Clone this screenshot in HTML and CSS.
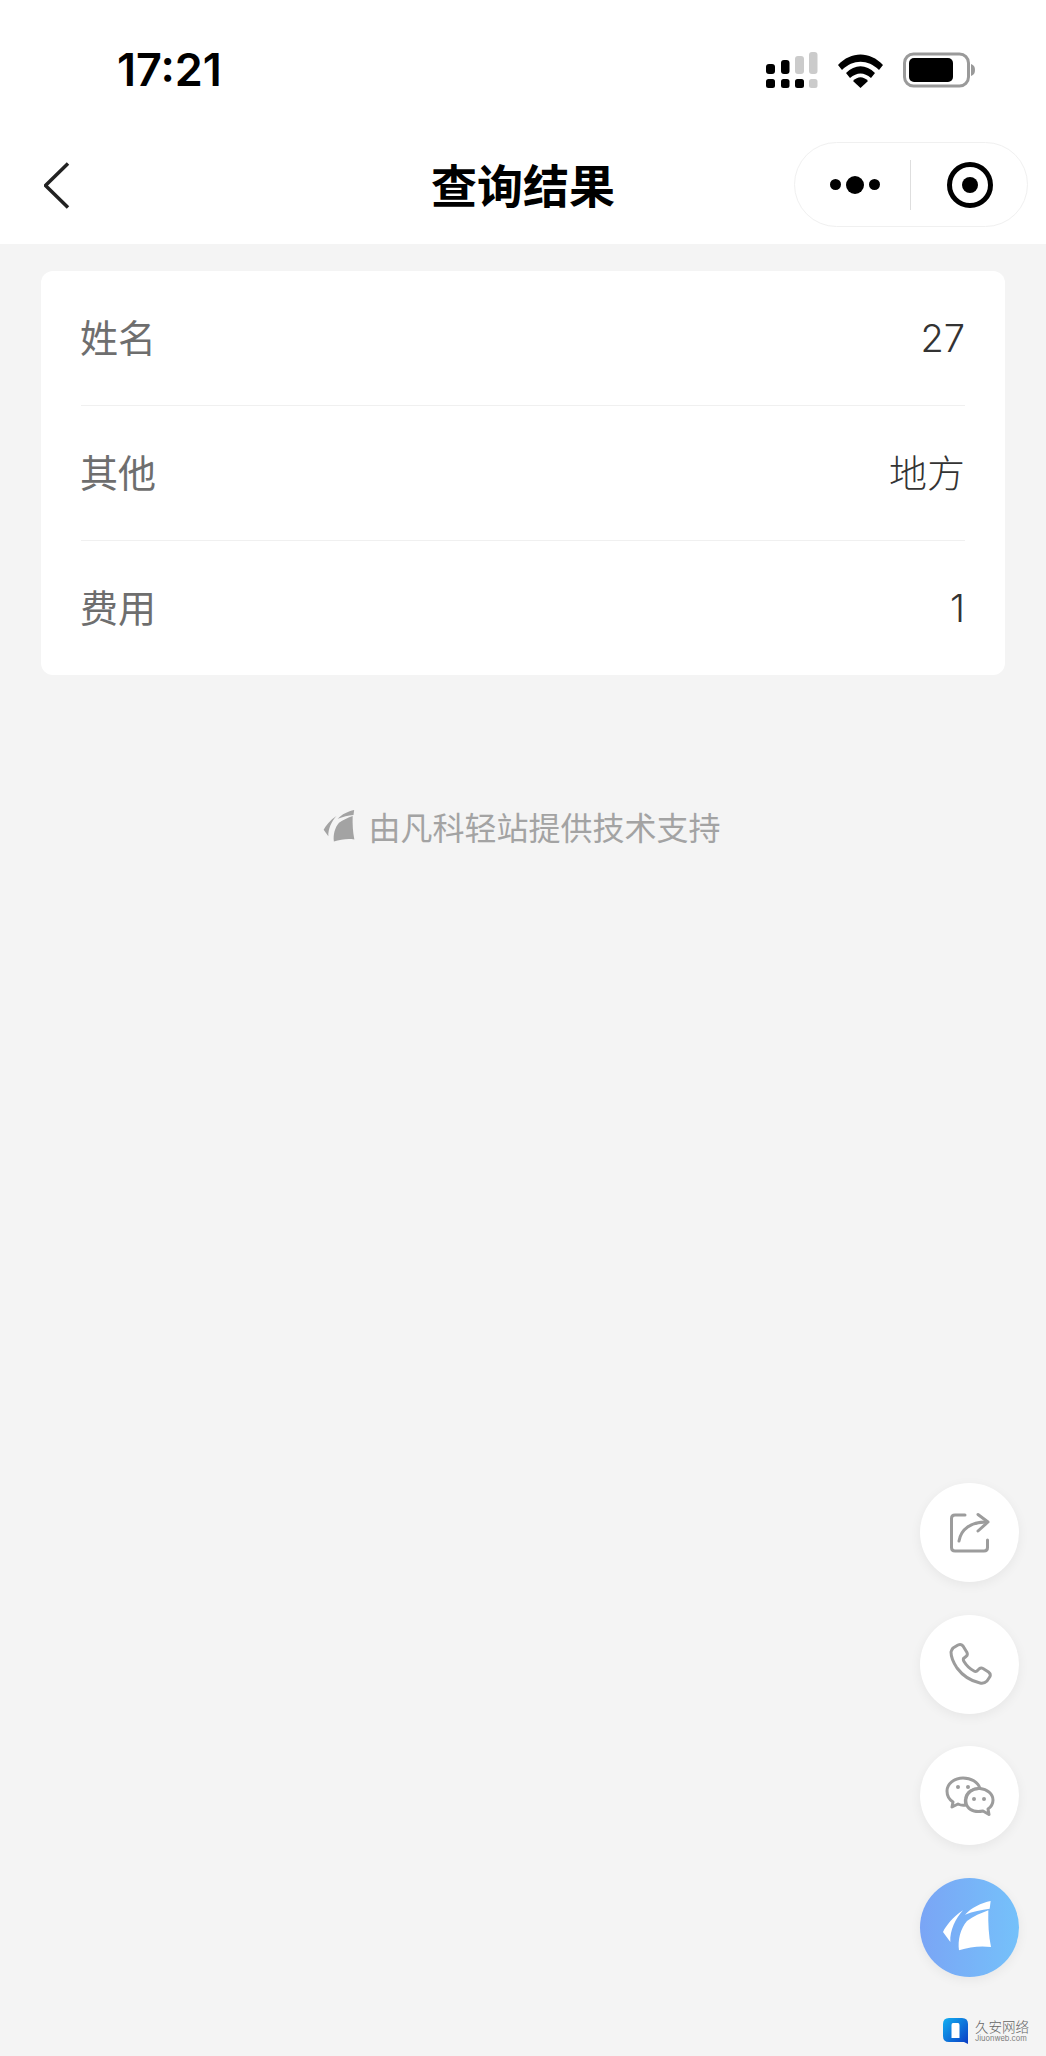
FILE: index.html
```html
<!DOCTYPE html>
<html lang="zh-CN">
<head>
    <meta charset="UTF-8">
    <meta name="viewport" content="width=device-width, initial-scale=1.0">
    <title>查询结果</title>
    <link rel="stylesheet" href="styles.css">
</head>
<body>
    <div class="page">
        <header class="top">
            <div class="status-bar">
                <span class="time">17:21</span>
                <div class="status-icons">
                    <svg class="icon-signal" viewBox="0 0 52 36">
                        <g fill="#000">
                            <rect x="0" y="12" width="9" height="10" rx="3"/>
                            <rect x="15" y="8" width="8.500" height="14" rx="3"/>
                            <rect x="0" y="27" width="9" height="9" rx="2.500"/>
                            <rect x="15" y="27" width="8.500" height="9" rx="2.500"/>
                            <rect x="29" y="27" width="9" height="9" rx="2.500"/>
                        </g>
                        <g fill="#cbcbcb">
                            <rect x="29" y="4" width="9" height="18" rx="3"/>
                            <rect x="43" y="0" width="8.500" height="22" rx="3"/>
                            <rect x="43" y="27" width="8.500" height="9" rx="2.500"/>
                        </g>
                    </svg>
                    <svg class="icon-wifi" viewBox="0 0 45 36">
                        <path d="M0 13 C13 -1 32 -1 45 13 L41 18 C30 7 15 7 4 18 Z"/>
                        <path d="M8 21 C17 12 28 12 37 21 L33 26 C26 20 19 20 12 26 Z"/>
                        <path d="M15 29 C20 24 25 24 30 29 L22.500 36 Z"/>
                    </svg>
                    <svg class="icon-battery" viewBox="0 0 72 36">
                        <rect x="1.500" y="2" width="64" height="32" rx="9" fill="none" stroke="#9a9a9a" stroke-width="3"/>
                        <rect x="6" y="6" width="44" height="24" rx="5" fill="#000"/>
                        <path d="M68 12 C71 13 72 15 72 18 C72 21 71 23 68 24 Z" fill="#999"/>
                    </svg>
                </div>
            </div>
            <nav class="nav-bar">
                <div class="nav-left">
                    <svg class="icon-back" viewBox="0 0 27 48">
                        <path d="M24 1.500 L1.500 23.500 L24 45.500" fill="none" stroke="#222" stroke-width="3.500"/>
                    </svg>
                </div>
                <h1 class="nav-title">查询结果</h1>
                <div class="nav-right">
                    <div class="capsule">
                        <div class="capsule-dots">
                            <span class="dot"></span>
                            <span class="dot dot-big"></span>
                            <span class="dot"></span>
                        </div>
                        <span class="capsule-line"></span>
                        <div class="capsule-target">
                            <span class="target-inner"></span>
                        </div>
                    </div>
                </div>
            </nav>
        </header>

        <main class="content">
            <section class="result-card">
                <div class="result-row">
                    <span class="label">姓名</span>
                    <span class="value">27</span>
                </div>
                <div class="result-row">
                    <span class="label">其他</span>
                    <span class="value value-text">地方</span>
                </div>
                <div class="result-row">
                    <span class="label">费用</span>
                    <span class="value">1</span>
                </div>
            </section>

            <div class="support">
                <svg class="support-logo" viewBox="40 32 144 150">
                    <path d="M100 60 C70 80 50 105 40 125 L62 155 C60 120 78 85 100 60 Z"/>
                    <path d="M106 73 C125 52 155 38 183 32 L180 55 C155 58 130 63 106 73 Z"/>
                    <path d="M112 92 C130 78 155 68 176 60 C175 100 177 135 184 170 C150 166 120 170 88 180 C84 150 92 115 112 92 Z"/>
                </svg>
                <span>由凡科轻站提供技术支持</span>
            </div>
        </main>

        <div class="float-btns">
            <div class="float-btn">
                <svg viewBox="0 0 44 44">
                    <path d="M17 4 H7 Q3.500 4 3.500 7.500 V36.500 Q3.500 40 7 40 H36 Q39.500 40 39.500 36.500 V29" class="line"/>
                    <path d="M11 30 C13 18 23 11 38 11" class="line"/>
                    <path d="M30 3.500 L40 11 L30 20" class="line"/>
                </svg>
            </div>
            <div class="float-btn">
                <svg viewBox="0 0 44 44">
                    <path d="M5 6 L10 3 Q13 1.500 15 4 L19 10.500 Q20 13 18 14.500 L15.500 16.500 Q15 18 16 19.500 Q20 26 26 29 Q27.500 30 29 29 L31 27 Q33 25.500 35 26.500 L40.500 30 Q43 32 42 34.500 L39 39 Q36 42 32 41 Q18 38 9 26 Q3 17 3 10 Q3.500 8 5 6 Z" class="line"/>
                </svg>
            </div>
            <div class="float-btn">
                <svg class="icon-chat" viewBox="0 0 50 40">
                    <path d="M21 29 Q20 26 20.500 23 C21.500 16 28 12 35 12.500 C33 6 26 2 18 2 C9 2 2 8 2 15 C2 20 5 24 8 26 L7 31 L13 28 Q17 30 21 29 Z" class="line"/>
                    <path d="M35 12.500 C42 13 48 18 48 24 C48 28 46 31 43 33 L44 38.500 L38 35 Q33 36 29 35 C24 34 20 29 21 23 C22 16 28 12 35 12.500 Z" class="line"/>
                    <circle cx="13" cy="11" r="2" class="spot"/>
                    <circle cx="23" cy="11" r="2" class="spot"/>
                    <circle cx="29" cy="23" r="2" class="spot"/>
                    <circle cx="39" cy="23" r="2" class="spot"/>
                </svg>
            </div>
            <div class="float-btn float-btn-main">
                <svg viewBox="40 32 144 150">
                    <path d="M100 60 C70 80 50 105 40 125 L62 155 C60 120 78 85 100 60 Z"/>
                    <path d="M106 73 C125 52 155 38 183 32 L180 55 C155 58 130 63 106 73 Z"/>
                    <path d="M112 92 C130 78 155 68 176 60 C175 100 177 135 184 170 C150 166 120 170 88 180 C84 150 92 115 112 92 Z"/>
                </svg>
            </div>
        </div>

        <div class="watermark">
            <svg class="watermark-logo" viewBox="0 0 26 26">
                <defs>
                    <linearGradient id="wm" x1="0" y1="0" x2="1" y2="1">
                        <stop offset="0" stop-color="#12b0f2"/>
                        <stop offset="1" stop-color="#0a3cc4"/>
                    </linearGradient>
                </defs>
                <path d="M6 0 H19 Q25 0 25 6 V26 L21 24 H6 Q0 24 0 18 V6 Q0 0 6 0 Z" fill="url(#wm)"/>
                <path d="M10 5 H15 Q16.500 5 16.500 7 V20 H8.500 V7 Q8.500 5 10 5 Z" fill="#fff"/>
            </svg>
            <div class="watermark-text">
                <span class="watermark-name">久安网络</span>
                <span class="watermark-url">Jiuonweb.com</span>
            </div>
        </div>
    </div>
</body>
</html>
```

FILE: styles.css
```css
* {
    box-sizing: border-box;
}

html, body {
    margin: 0;
    padding: 0;
}

body {
    font-family: Inter, "Noto Sans CJK SC", sans-serif;
    background: #f4f4f4;
}

.page {
    position: relative;
    height: 100vh;
    overflow: hidden;
}

.top {
    background: #fff;
    height: 244px;
}

.status-bar {
    height: 127px;
    padding: 12px 71px 0 117px;
    display: flex;
    justify-content: space-between;
    align-items: center;
}

.time {
    font-size: 45px;
    font-weight: 600;
    color: #000;
}

.status-icons {
    display: flex;
    align-items: center;
    gap: 20px;
}

.status-icons svg {
    display: block;
    height: 36px;
}

.icon-signal {
    width: 52px;
}

.icon-wifi {
    width: 45px;
}

.icon-battery {
    width: 72px;
}

.nav-bar {
    height: 117px;
    display: grid;
    grid-template-columns: 1fr auto 1fr;
    align-items: center;
}

.nav-left {
    padding-left: 44px;
}

.icon-back {
    display: block;
    width: 27px;
    height: 48px;
}

.nav-title {
    margin: 0;
    padding-bottom: 6px;
    font-family: "Noto Sans CJK SC", sans-serif;
    font-size: 46px;
    font-weight: 700;
    color: #000;
}

.nav-right {
    display: flex;
    justify-content: flex-end;
    padding: 0 18px 2px 0;
}

.capsule {
    width: 234px;
    height: 85px;
    border: 1px solid #f0f0f0;
    border-radius: 43px;
    display: flex;
    align-items: center;
}

.capsule-dots {
    width: 115px;
    padding-left: 4px;
    display: flex;
    justify-content: center;
    align-items: center;
    gap: 5px;
}

.dot {
    width: 11px;
    height: 11px;
    border-radius: 50%;
    background: #000;
}

.dot-big {
    width: 18px;
    height: 18px;
}

.capsule-line {
    width: 1px;
    height: 50px;
    background: #dedede;
}

.capsule-target {
    width: 46px;
    height: 46px;
    margin-left: 36px;
    border: 5px solid #000;
    border-radius: 50%;
    display: flex;
    justify-content: center;
    align-items: center;
}

.target-inner {
    width: 16px;
    height: 16px;
    border-radius: 50%;
    background: #000;
}

.result-card {
    margin: 27px 41px 0;
    padding: 0 40px;
    background: #fff;
    border-radius: 12px;
}

.result-row {
    height: 135px;
    display: flex;
    justify-content: space-between;
    align-items: center;
    font-size: 38px;
    border-top: 1px solid #f0f0f0;
}

.result-row:first-child {
    height: 134px;
    border-top: none;
}

.label {
    margin-left: -1px;
    padding-bottom: 5px;
    color: #6e6e6e;
    font-family: "Noto Sans CJK SC", sans-serif;
}

.value {
    color: #333;
    font-weight: 300;
}

.value-text {
    padding-bottom: 5px;
    font-family: "Noto Sans CJK SC", sans-serif;
}

.support {
    margin-top: 126px;
    padding-right: 2px;
    display: flex;
    justify-content: center;
    align-items: center;
    gap: 13px;
    height: 50px;
    font-size: 32px;
    color: #a3a3a3;
    font-family: "Noto Sans CJK SC", sans-serif;
}

.support-logo {
    width: 32px;
    height: 32px;
    fill: #a3a3a3;
}

.float-btns {
    position: absolute;
    right: 27px;
    bottom: 79px;
    display: flex;
    flex-direction: column;
    gap: 32.670px;
}

.float-btn {
    width: 99px;
    height: 99px;
    border-radius: 50%;
    background: #fff;
    box-shadow: 0 3px 12px rgba(0, 0, 0, 0.06);
    display: flex;
    justify-content: center;
    align-items: center;
}

.float-btn svg {
    width: 44px;
    height: 44px;
}

.float-btn .icon-chat {
    width: 50px;
    height: 40px;
}

.float-btn .line {
    fill: none;
    stroke: #9c9c9c;
    stroke-width: 3;
    stroke-linecap: round;
    stroke-linejoin: round;
}

.float-btn .spot {
    fill: #9c9c9c;
}

.float-btn-main {
    padding: 0 6px 4px 0;
    background: linear-gradient(90deg, #7aa5f5, #75c1fa);
}

.float-btn-main svg {
    width: 48px;
    height: 50px;
    fill: #fff;
}

.watermark {
    position: absolute;
    left: 943px;
    top: 2018px;
    display: flex;
    gap: 6px;
}

.watermark-logo {
    width: 26px;
    height: 26px;
}

.watermark-text {
    display: flex;
    flex-direction: column;
    color: #666;
}

.watermark-name {
    font-family: "Noto Sans CJK SC", sans-serif;
    font-size: 13.500px;
    font-weight: 300;
    line-height: 16px;
}

.watermark-url {
    font-size: 7.500px;
    line-height: 9px;
    color: #7a7a7a;
}
```
